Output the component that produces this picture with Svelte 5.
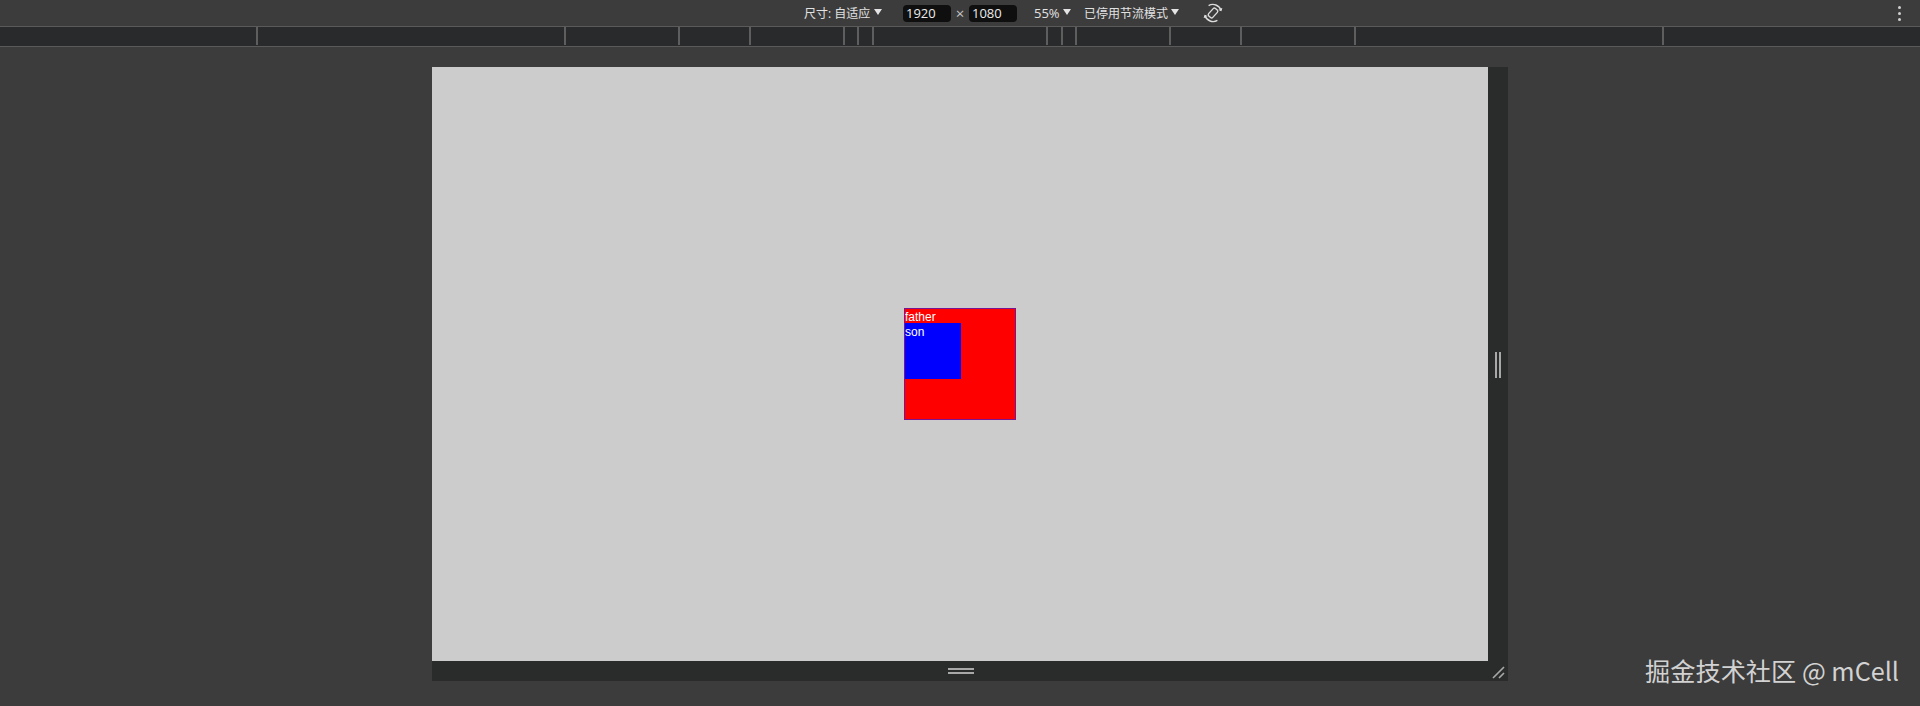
<script>
  const ticks = [258, 566, 680, 751, 845, 859, 874, 1048, 1063, 1077, 1171, 1242, 1356, 1664];
  const segments = ticks.map((t, i) => t - (i ? ticks[i - 1] : 0));
</script>

<div class="page">
  <header class="toolbar">
    <span class="label size">尺寸: 自适应</span>
    <i class="arrow a1"></i>
    <span class="field">1920</span>
    <span class="times">×</span>
    <span class="field">1080</span>
    <span class="label zoom">55%</span>
    <i class="arrow a2"></i>
    <span class="label throttle">已停用节流模式</span>
    <i class="arrow a3"></i>
    <svg class="rotate" width="20" height="20" viewBox="0 0 20 20" fill="none" stroke="#dcdcdc">
      <rect x="7.2" y="5" width="5.6" height="10" rx="1.6" stroke-width="1.4" transform="rotate(42 10 10)" />
      <path d="M5.6 2.6A8.6 8.6 0 0 1 18 7.2M14.4 17.4A8.6 8.6 0 0 1 2 12.8" stroke-width="1.4" />
      <path d="M15.8 6.6 18.2 7.8 18.8 5M4.2 13.4 1.8 12.2 1.2 15" stroke-width="1" />
    </svg>
    <div class="dots"><b></b><b></b><b></b></div>
  </header>

  <div class="ruler">
    {#each segments as width}
      <span class="segment" style="width: {width}px"></span>
    {/each}
  </div>

  <main class="stage">
    <div class="device">
      <div class="viewport">
        <div class="father">
          father
          <div class="son">son</div>
        </div>
      </div>
      <div class="side"><span class="grip-v"></span></div>
      <div class="bottom"><span class="grip-h"></span></div>
      <div class="corner">
        <svg width="20" height="20" viewBox="0 0 20 20" stroke="#a8a8a8" stroke-width="1.6">
          <path d="M5 17 16 6M11 17 16 12" />
        </svg>
      </div>
    </div>
  </main>

  <div class="watermark">掘金技术社区 @ mCell</div>
</div>

<style>
  :global(body) {
    margin: 0;
    background: #3c3c3c;
  }

  .page {
    position: relative;
    height: 706px;
    overflow: hidden;
    background: #3c3c3c;
    font-family: "Open Sans", "Noto Sans CJK SC", sans-serif;
  }

  .toolbar {
    display: flex;
    align-items: center;
    height: 26px;
    padding-left: 804px;
    box-sizing: border-box;
    color: #e2e2e2;
    font-size: 12px;
  }

  .label {
    white-space: nowrap;
  }

  .size {
    width: 68px;
  }

  .zoom {
    width: 28px;
    margin-left: 17px;
    font-size: 13px;
  }

  .throttle {
    width: 85px;
    margin-left: 13px;
    font-size: 12px;
  }

  .arrow {
    width: 0;
    height: 0;
    margin-top: -2px;
    border-left: 4px solid transparent;
    border-right: 4px solid transparent;
    border-top: 6px solid #e4e4e4;
  }

  .a1 {
    margin-left: 2px;
    margin-right: 21px;
  }

  .a2 {
    margin-left: 1px;
  }

  .a3 {
    margin-left: 2px;
    margin-right: 24px;
  }

  .field {
    width: 48px;
    height: 17px;
    padding-left: 3px;
    box-sizing: border-box;
    border-radius: 4px;
    background: #0f0f0f;
    color: #ececec;
    font-size: 13px;
    line-height: 17px;
  }

  .times {
    width: 18px;
    color: #c4c4c4;
    text-align: center;
    font-size: 15px;
    line-height: 17px;
  }

  .rotate {
    display: block;
  }

  .dots {
    display: flex;
    flex-direction: column;
    gap: 3px;
    margin-left: auto;
    margin-right: 19px;
  }

  .dots b {
    width: 3px;
    height: 3px;
    border-radius: 50%;
    background: #d0d0d0;
  }

  .ruler {
    display: flex;
    height: 21px;
    box-sizing: border-box;
    background: #292a2c;
    border-top: 1px solid #5a5a5a;
    border-bottom: 1px solid #5a5a5a;
  }

  .segment {
    box-sizing: border-box;
    height: 18px;
    border-right: 2px solid #5e5e5e;
  }

  .stage {
    padding: 20px 0 0 432px;
  }

  .device {
    display: grid;
    grid-template-columns: 1056px 20px;
    grid-template-rows: 594px 20px;
    width: 1076px;
    background: #2a2c2c;
  }

  .viewport {
    display: flex;
    align-items: center;
    justify-content: center;
    background: #cccccc;
  }

  .father {
    width: 110px;
    height: 110px;
    border: 1px solid #7a1490;
    background: #ff0000;
    color: #ffffff;
    font-size: 12px;
    line-height: 16px;
    font-family: "Liberation Sans", sans-serif;
  }

  .son {
    width: 56px;
    height: 56px;
    margin-top: -2px;
    background: #0000ff;
    line-height: 18px;
  }

  .side,
  .bottom,
  .corner {
    display: flex;
    align-items: center;
    justify-content: center;
  }

  .grip-v {
    width: 6px;
    height: 26px;
    margin-top: 2px;
    border-left: 2px solid #a8a8a8;
    border-right: 2px solid #a8a8a8;
    box-sizing: border-box;
  }

  .grip-h {
    width: 26px;
    height: 6px;
    margin-left: 2px;
    border-top: 2px solid #a8a8a8;
    border-bottom: 2px solid #a8a8a8;
    box-sizing: border-box;
  }

  .watermark {
    position: absolute;
    right: 21px;
    top: 652px;
    color: #d2d2d2;
    font-family: "Noto Sans CJK SC", sans-serif;
    font-size: 25.2px;
    line-height: 36px;
    white-space: nowrap;
  }
</style>
